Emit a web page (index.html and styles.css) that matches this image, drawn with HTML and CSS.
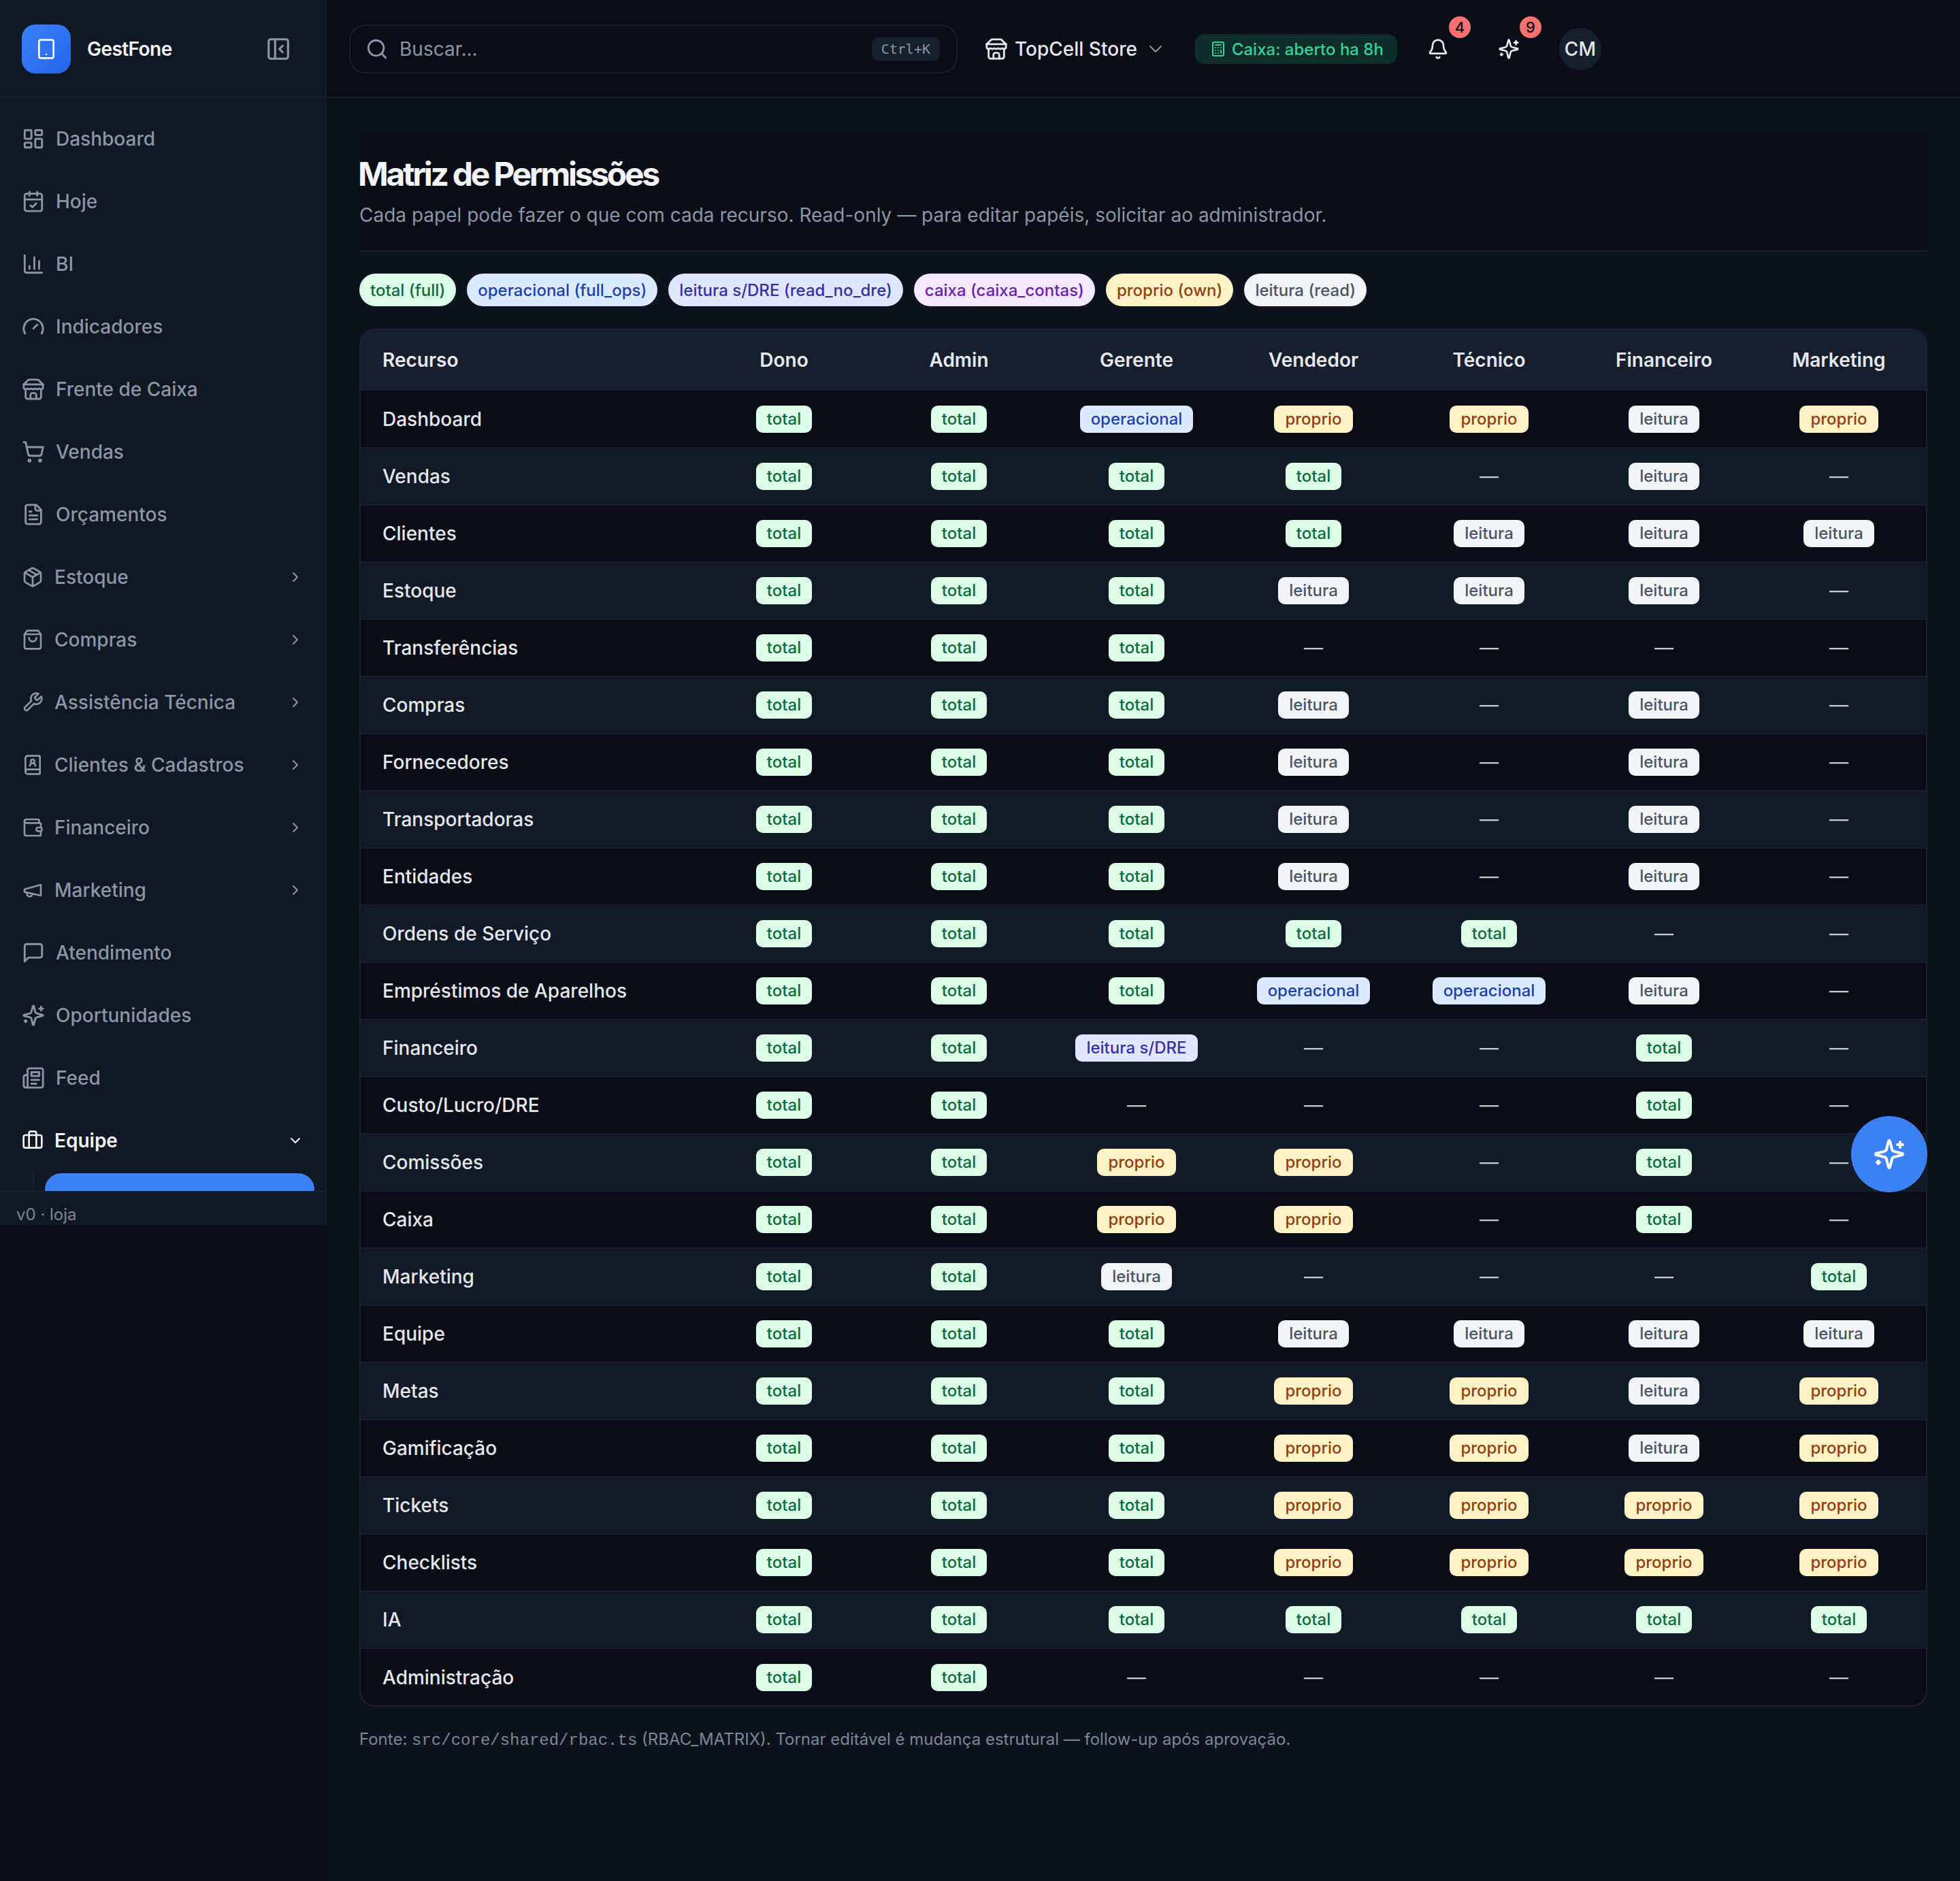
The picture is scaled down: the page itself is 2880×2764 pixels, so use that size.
FILE: index.html
```html
<!DOCTYPE html>
<html lang="pt-BR">
<head>
<meta charset="utf-8">
<title>Matriz de Permissões</title>
<link rel="stylesheet" href="styles.css">
</head>
<body>
<svg class="defs" width="0" height="0" aria-hidden="true">
<symbol id="i-tablet" viewBox="0 0 24 24"><rect x="4" y="2" width="16" height="20" rx="2"/><path d="M12 18h.01"/></symbol>
<symbol id="i-panel" viewBox="0 0 24 24"><rect x="3" y="3" width="18" height="18" rx="2"/><path d="M9 3v18"/><path d="m16 15-3-3 3-3"/></symbol>
<symbol id="i-dash" viewBox="0 0 24 24"><rect x="3" y="3" width="7" height="9" rx="1"/><rect x="14" y="3" width="7" height="5" rx="1"/><rect x="14" y="12" width="7" height="9" rx="1"/><rect x="3" y="16" width="7" height="5" rx="1"/></symbol>
<symbol id="i-cal" viewBox="0 0 24 24"><path d="M8 2v4"/><path d="M16 2v4"/><rect x="3" y="4" width="18" height="18" rx="2"/><path d="M3 10h18"/><path d="m9 16 2 2 4-4"/></symbol>
<symbol id="i-chart" viewBox="0 0 24 24"><path d="M3 3v16a2 2 0 0 0 2 2h16"/><path d="M18 17V9"/><path d="M13 17V5"/><path d="M8 17v-3"/></symbol>
<symbol id="i-gauge" viewBox="0 0 24 24"><path d="m12 14 4-4"/><path d="M3.34 19a10 10 0 1 1 17.32 0"/></symbol>
<symbol id="i-store" viewBox="0 0 24 24"><path d="m2 7 4.41-4.41A2 2 0 0 1 7.83 2h8.34a2 2 0 0 1 1.42.59L22 7"/><path d="M4 12v8a2 2 0 0 0 2 2h12a2 2 0 0 0 2-2v-8"/><path d="M15 22v-4a2 2 0 0 0-2-2h-2a2 2 0 0 0-2 2v4"/><path d="M2 7h20"/><path d="M22 7v3a2 2 0 0 1-2 2a2.7 2.7 0 0 1-1.59-.63.7.7 0 0 0-.82 0A2.7 2.7 0 0 1 16 12a2.7 2.7 0 0 1-1.59-.63.7.7 0 0 0-.82 0A2.7 2.7 0 0 1 12 12a2.7 2.7 0 0 1-1.59-.63.7.7 0 0 0-.82 0A2.7 2.7 0 0 1 8 12a2.7 2.7 0 0 1-1.59-.63.7.7 0 0 0-.82 0A2.7 2.7 0 0 1 4 12a2 2 0 0 1-2-2V7"/></symbol>
<symbol id="i-cart" viewBox="0 0 24 24"><circle cx="8" cy="21" r="1"/><circle cx="19" cy="21" r="1"/><path d="M2.05 2.05h2l2.66 12.42a2 2 0 0 0 2 1.58h9.78a2 2 0 0 0 1.95-1.57l1.65-7.43H5.12"/></symbol>
<symbol id="i-file" viewBox="0 0 24 24"><path d="M15 2H6a2 2 0 0 0-2 2v16a2 2 0 0 0 2 2h12a2 2 0 0 0 2-2V7Z"/><path d="M14 2v4a2 2 0 0 0 2 2h4"/><path d="M10 9H8"/><path d="M16 13H8"/><path d="M16 17H8"/></symbol>
<symbol id="i-pkg" viewBox="0 0 24 24"><path d="m7.5 4.27 9 5.15"/><path d="M21 8a2 2 0 0 0-1-1.73l-7-4a2 2 0 0 0-2 0l-7 4A2 2 0 0 0 3 8v8a2 2 0 0 0 1 1.73l7 4a2 2 0 0 0 2 0l7-4A2 2 0 0 0 21 16Z"/><path d="m3.3 7 8.7 5 8.7-5"/><path d="M12 22V12"/></symbol>
<symbol id="i-bag" viewBox="0 0 24 24"><path d="M6 2 3 6v14a2 2 0 0 0 2 2h14a2 2 0 0 0 2-2V6l-3-4Z"/><path d="M3 6h18"/><path d="M16 10a4 4 0 0 1-8 0"/></symbol>
<symbol id="i-wrench" viewBox="0 0 24 24"><path d="M14.7 6.3a1 1 0 0 0 0 1.4l1.6 1.6a1 1 0 0 0 1.4 0l3.77-3.77a6 6 0 0 1-7.94 7.94l-6.91 6.91a2.12 2.12 0 0 1-3-3l6.91-6.91a6 6 0 0 1 7.94-7.94l-3.76 3.76z"/></symbol>
<symbol id="i-book" viewBox="0 0 24 24"><path d="M15 13a3 3 0 1 0-6 0"/><path d="M4 19.5v-15A2.5 2.5 0 0 1 6.5 2H19a1 1 0 0 1 1 1v18a1 1 0 0 1-1 1H6.5a1 1 0 0 1 0-5H20"/><circle cx="12" cy="8" r="2"/></symbol>
<symbol id="i-wallet" viewBox="0 0 24 24"><path d="M19 7V4a1 1 0 0 0-1-1H5a2 2 0 0 0 0 4h15a1 1 0 0 1 1 1v4h-3a2 2 0 0 0 0 4h3a1 1 0 0 0 1-1v-2a1 1 0 0 0-1-1"/><path d="M3 5v14a2 2 0 0 0 2 2h15a1 1 0 0 0 1-1v-4"/></symbol>
<symbol id="i-mega" viewBox="0 0 24 24"><path d="m3 11 18-5v12L3 14v-3z"/><path d="M11.6 16.8a3 3 0 1 1-5.8-1.6"/></symbol>
<symbol id="i-msg" viewBox="0 0 24 24"><path d="M21 15a2 2 0 0 1-2 2H7l-4 4V5a2 2 0 0 1 2-2h14a2 2 0 0 1 2 2z"/></symbol>
<symbol id="i-spark" viewBox="0 0 24 24"><path d="M9.937 15.5A2 2 0 0 0 8.5 14.063l-6.135-1.582a.5.5 0 0 1 0-.962L8.5 9.936A2 2 0 0 0 9.937 8.5l1.582-6.135a.5.5 0 0 1 .963 0L14.063 8.5A2 2 0 0 0 15.5 9.937l6.135 1.581a.5.5 0 0 1 0 .964L15.5 14.063a2 2 0 0 0-1.437 1.437l-1.582 6.135a.5.5 0 0 1-.963 0z"/><path d="M20 3v4"/><path d="M22 5h-4"/><path d="M4 17v2"/><path d="M5 18H3"/></symbol>
<symbol id="i-news" viewBox="0 0 24 24"><path d="M4 22h16a2 2 0 0 0 2-2V4a2 2 0 0 0-2-2H8a2 2 0 0 0-2 2v16a2 2 0 0 1-2 2Zm0 0a2 2 0 0 1-2-2v-9c0-1.1.9-2 2-2h2"/><path d="M18 14h-8"/><path d="M15 18h-5"/><path d="M10 6h8v4h-8V6Z"/></symbol>
<symbol id="i-case" viewBox="0 0 24 24"><rect x="2" y="6" width="20" height="14" rx="2"/><path d="M16 20V4a2 2 0 0 0-2-2h-4a2 2 0 0 0-2 2v16"/></symbol>
<symbol id="i-right" viewBox="0 0 24 24"><path d="m9 18 6-6-6-6"/></symbol>
<symbol id="i-down" viewBox="0 0 24 24"><path d="m6 9 6 6 6-6"/></symbol>
<symbol id="i-search" viewBox="0 0 24 24"><circle cx="11" cy="11" r="8"/><path d="m21 21-4.3-4.3"/></symbol>
<symbol id="i-bell" viewBox="0 0 24 24"><path d="M10.268 21a2 2 0 0 0 3.464 0"/><path d="M3.262 15.326A1 1 0 0 0 4 17h16a1 1 0 0 0 .74-1.673C19.41 13.956 18 12.499 18 8A6 6 0 0 0 6 8c0 4.499-1.411 5.956-2.738 7.326"/></symbol>
<symbol id="i-calc" viewBox="0 0 24 24"><rect x="4" y="2" width="16" height="20" rx="2"/><path d="M8 6h8"/><path d="M16 14v4"/><path d="M16 10h.01"/><path d="M12 10h.01"/><path d="M8 10h.01"/><path d="M12 14h.01"/><path d="M8 14h.01"/><path d="M12 18h.01"/><path d="M8 18h.01"/></symbol>
</svg>
<div class="app">
<aside class="side">
  <div class="brand">
    <span class="logo"><svg class="ic ic-logo"><use href="#i-tablet"/></svg></span>
    <span class="brand-name">GestFone</span>
    <svg class="ic ic-toggle"><use href="#i-panel"/></svg>
  </div>
  <nav class="nav">
    <a class="item"><svg class="ic"><use href="#i-dash"/></svg><span>Dashboard</span></a>
    <a class="item"><svg class="ic"><use href="#i-cal"/></svg><span>Hoje</span></a>
    <a class="item"><svg class="ic"><use href="#i-chart"/></svg><span>BI</span></a>
    <a class="item"><svg class="ic"><use href="#i-gauge"/></svg><span>Indicadores</span></a>
    <a class="item"><svg class="ic"><use href="#i-store"/></svg><span>Frente de Caixa</span></a>
    <a class="item"><svg class="ic"><use href="#i-cart"/></svg><span>Vendas</span></a>
    <a class="item"><svg class="ic"><use href="#i-file"/></svg><span>Orçamentos</span></a>
    <a class="item group"><svg class="ic"><use href="#i-pkg"/></svg><span>Estoque</span><svg class="ic chev"><use href="#i-right"/></svg></a>
    <a class="item group"><svg class="ic"><use href="#i-bag"/></svg><span>Compras</span><svg class="ic chev"><use href="#i-right"/></svg></a>
    <a class="item group"><svg class="ic"><use href="#i-wrench"/></svg><span>Assistência Técnica</span><svg class="ic chev"><use href="#i-right"/></svg></a>
    <a class="item group"><svg class="ic"><use href="#i-book"/></svg><span>Clientes &amp; Cadastros</span><svg class="ic chev"><use href="#i-right"/></svg></a>
    <a class="item group"><svg class="ic"><use href="#i-wallet"/></svg><span>Financeiro</span><svg class="ic chev"><use href="#i-right"/></svg></a>
    <a class="item group"><svg class="ic"><use href="#i-mega"/></svg><span>Marketing</span><svg class="ic chev"><use href="#i-right"/></svg></a>
    <a class="item"><svg class="ic"><use href="#i-msg"/></svg><span>Atendimento</span></a>
    <a class="item"><svg class="ic"><use href="#i-spark"/></svg><span>Oportunidades</span></a>
    <a class="item"><svg class="ic"><use href="#i-news"/></svg><span>Feed</span></a>
    <a class="item group open"><svg class="ic"><use href="#i-case"/></svg><span>Equipe</span><svg class="ic chev"><use href="#i-down"/></svg></a>
    <div class="sub"><div class="sub-active"></div></div>
  </nav>
  <div class="side-foot">v0 · loja</div>
</aside>
<div class="main">
  <header class="top">
    <div class="search">
      <svg class="ic ic-search"><use href="#i-search"/></svg>
      <span class="search-text">Buscar...</span>
      <kbd class="kbd">Ctrl+K</kbd>
    </div>
    <div class="store">
      <svg class="ic ic-store"><use href="#i-store"/></svg>
      <span>TopCell Store</span>
      <svg class="ic ic-storechev"><use href="#i-down"/></svg>
    </div>
    <div class="cash">
      <svg class="ic ic-calc"><use href="#i-calc"/></svg>
      <span>Caixa: aberto ha 8h</span>
    </div>
    <div class="tool tool-bell"><svg class="ic ic-tool"><use href="#i-bell"/></svg><span class="count">4</span></div>
    <div class="tool tool-spark"><svg class="ic ic-tool"><use href="#i-spark"/></svg><span class="count">9</span></div>
    <div class="avatar">CM</div>
  </header>
  <main class="content">
    <section class="page-head">
      <h1>Matriz de Permissões</h1>
      <p>Cada papel pode fazer o que com cada recurso. Read-only — para editar papéis, solicitar ao administrador.</p>
    </section>
    <div class="chips">
      <span class="chip c-t">total (full)</span>
      <span class="chip c-o">operacional (full_ops)</span>
      <span class="chip c-l">leitura s/DRE (read_no_dre)</span>
      <span class="chip c-c">caixa (caixa_contas)</span>
      <span class="chip c-p">proprio (own)</span>
      <span class="chip c-r">leitura (read)</span>
    </div>
    <div class="table-wrap">
      <table class="matrix">
        <colgroup><col class="w0"><col class="w1"><col class="w2"><col class="w3"><col class="w4"><col class="w5"><col class="w6"><col class="w7"></colgroup>
        <thead><tr><th>Recurso</th><th>Dono</th><th>Admin</th><th>Gerente</th><th>Vendedor</th><th>Técnico</th><th>Financeiro</th><th>Marketing</th></tr></thead>
        <tbody>
<tr><td>Dashboard</td><td><b class="c-t">total</b></td><td><b class="c-t">total</b></td><td><b class="c-o">operacional</b></td><td><b class="c-p">proprio</b></td><td><b class="c-p">proprio</b></td><td><b class="c-r">leitura</b></td><td><b class="c-p">proprio</b></td></tr>
<tr><td>Vendas</td><td><b class="c-t">total</b></td><td><b class="c-t">total</b></td><td><b class="c-t">total</b></td><td><b class="c-t">total</b></td><td>—</td><td><b class="c-r">leitura</b></td><td>—</td></tr>
<tr><td>Clientes</td><td><b class="c-t">total</b></td><td><b class="c-t">total</b></td><td><b class="c-t">total</b></td><td><b class="c-t">total</b></td><td><b class="c-r">leitura</b></td><td><b class="c-r">leitura</b></td><td><b class="c-r">leitura</b></td></tr>
<tr><td>Estoque</td><td><b class="c-t">total</b></td><td><b class="c-t">total</b></td><td><b class="c-t">total</b></td><td><b class="c-r">leitura</b></td><td><b class="c-r">leitura</b></td><td><b class="c-r">leitura</b></td><td>—</td></tr>
<tr><td>Transferências</td><td><b class="c-t">total</b></td><td><b class="c-t">total</b></td><td><b class="c-t">total</b></td><td>—</td><td>—</td><td>—</td><td>—</td></tr>
<tr><td>Compras</td><td><b class="c-t">total</b></td><td><b class="c-t">total</b></td><td><b class="c-t">total</b></td><td><b class="c-r">leitura</b></td><td>—</td><td><b class="c-r">leitura</b></td><td>—</td></tr>
<tr><td>Fornecedores</td><td><b class="c-t">total</b></td><td><b class="c-t">total</b></td><td><b class="c-t">total</b></td><td><b class="c-r">leitura</b></td><td>—</td><td><b class="c-r">leitura</b></td><td>—</td></tr>
<tr><td>Transportadoras</td><td><b class="c-t">total</b></td><td><b class="c-t">total</b></td><td><b class="c-t">total</b></td><td><b class="c-r">leitura</b></td><td>—</td><td><b class="c-r">leitura</b></td><td>—</td></tr>
<tr><td>Entidades</td><td><b class="c-t">total</b></td><td><b class="c-t">total</b></td><td><b class="c-t">total</b></td><td><b class="c-r">leitura</b></td><td>—</td><td><b class="c-r">leitura</b></td><td>—</td></tr>
<tr><td>Ordens de Serviço</td><td><b class="c-t">total</b></td><td><b class="c-t">total</b></td><td><b class="c-t">total</b></td><td><b class="c-t">total</b></td><td><b class="c-t">total</b></td><td>—</td><td>—</td></tr>
<tr><td>Empréstimos de Aparelhos</td><td><b class="c-t">total</b></td><td><b class="c-t">total</b></td><td><b class="c-t">total</b></td><td><b class="c-o">operacional</b></td><td><b class="c-o">operacional</b></td><td><b class="c-r">leitura</b></td><td>—</td></tr>
<tr><td>Financeiro</td><td><b class="c-t">total</b></td><td><b class="c-t">total</b></td><td><b class="c-l">leitura s/DRE</b></td><td>—</td><td>—</td><td><b class="c-t">total</b></td><td>—</td></tr>
<tr><td>Custo/Lucro/DRE</td><td><b class="c-t">total</b></td><td><b class="c-t">total</b></td><td>—</td><td>—</td><td>—</td><td><b class="c-t">total</b></td><td>—</td></tr>
<tr><td>Comissões</td><td><b class="c-t">total</b></td><td><b class="c-t">total</b></td><td><b class="c-p">proprio</b></td><td><b class="c-p">proprio</b></td><td>—</td><td><b class="c-t">total</b></td><td>—</td></tr>
<tr><td>Caixa</td><td><b class="c-t">total</b></td><td><b class="c-t">total</b></td><td><b class="c-p">proprio</b></td><td><b class="c-p">proprio</b></td><td>—</td><td><b class="c-t">total</b></td><td>—</td></tr>
<tr><td>Marketing</td><td><b class="c-t">total</b></td><td><b class="c-t">total</b></td><td><b class="c-r">leitura</b></td><td>—</td><td>—</td><td>—</td><td><b class="c-t">total</b></td></tr>
<tr><td>Equipe</td><td><b class="c-t">total</b></td><td><b class="c-t">total</b></td><td><b class="c-t">total</b></td><td><b class="c-r">leitura</b></td><td><b class="c-r">leitura</b></td><td><b class="c-r">leitura</b></td><td><b class="c-r">leitura</b></td></tr>
<tr><td>Metas</td><td><b class="c-t">total</b></td><td><b class="c-t">total</b></td><td><b class="c-t">total</b></td><td><b class="c-p">proprio</b></td><td><b class="c-p">proprio</b></td><td><b class="c-r">leitura</b></td><td><b class="c-p">proprio</b></td></tr>
<tr><td>Gamificação</td><td><b class="c-t">total</b></td><td><b class="c-t">total</b></td><td><b class="c-t">total</b></td><td><b class="c-p">proprio</b></td><td><b class="c-p">proprio</b></td><td><b class="c-r">leitura</b></td><td><b class="c-p">proprio</b></td></tr>
<tr><td>Tickets</td><td><b class="c-t">total</b></td><td><b class="c-t">total</b></td><td><b class="c-t">total</b></td><td><b class="c-p">proprio</b></td><td><b class="c-p">proprio</b></td><td><b class="c-p">proprio</b></td><td><b class="c-p">proprio</b></td></tr>
<tr><td>Checklists</td><td><b class="c-t">total</b></td><td><b class="c-t">total</b></td><td><b class="c-t">total</b></td><td><b class="c-p">proprio</b></td><td><b class="c-p">proprio</b></td><td><b class="c-p">proprio</b></td><td><b class="c-p">proprio</b></td></tr>
<tr><td>IA</td><td><b class="c-t">total</b></td><td><b class="c-t">total</b></td><td><b class="c-t">total</b></td><td><b class="c-t">total</b></td><td><b class="c-t">total</b></td><td><b class="c-t">total</b></td><td><b class="c-t">total</b></td></tr>
<tr><td>Administração</td><td><b class="c-t">total</b></td><td><b class="c-t">total</b></td><td>—</td><td>—</td><td>—</td><td>—</td><td>—</td></tr>
        </tbody>
      </table>
    </div>
    <p class="source">Fonte: <code>src/core/shared/rbac.ts</code> (RBAC_MATRIX). Tornar editável é mudança estrutural — follow-up após aprovação.</p>
  </main>
</div>
</div>
<button class="fab" type="button" aria-label="Assistente"><svg class="ic ic-fab"><use href="#i-spark"/></svg></button>
</body>
</html>
```
FILE: styles.css
```css
* { box-sizing: border-box; }
html, body { margin: 0; padding: 0; }
body {
  position: relative;
  min-height: 2764px;
  background: #0a0d15;
  color: #e5e7eb;
  font-family: Inter, "Liberation Sans", sans-serif;
  font-size: 28px;
}
.defs { position: absolute; }
.app { display: grid; grid-template-columns: 480px 1fr; min-height: 2764px; }
.ic {
  display: block;
  flex: none;
  width: 32px;
  height: 32px;
  fill: none;
  stroke: currentColor;
  stroke-width: 2;
  stroke-linecap: round;
  stroke-linejoin: round;
}

/* sidebar */
.side {
  height: 1800px;
  display: flex;
  flex-direction: column;
  background: #101823;
  border-right: 2px solid #161e2c;
}
.brand {
  height: 144px;
  flex: none;
  display: flex;
  align-items: center;
  padding: 2px 50px 0 32px;
  border-bottom: 2px solid #182130;
}
.logo {
  width: 72px;
  height: 72px;
  border-radius: 20px;
  display: flex;
  align-items: center;
  justify-content: center;
  color: #fff;
  background: linear-gradient(135deg, #3b82f6, #2563eb);
}
.brand-name {
  margin-left: 24px;
  font-size: 28px;
  font-weight: 600;
  letter-spacing: -0.56px;
  color: #f3f4f6;
}
.ic-toggle { margin-left: auto; width: 38px; height: 38px; color: #8b95a8; }
.nav {
  flex: 1;
  min-height: 0;
  overflow: hidden;
  padding-top: 14px;
}
.item {
  height: 92px;
  display: flex;
  align-items: center;
  gap: 16px;
  padding: 0 32px;
  font-size: 28px;
  font-weight: 500;
  color: #8b95a8;
}
.item > .ic { width: 34px; height: 34px; }
.item.group > .ic { width: 32px; height: 32px; }
.item.group > .chev { width: 24px; height: 24px; margin-left: auto; margin-right: 0; }
.item.open { color: #f3f4f6; font-weight: 600; }
.sub { margin-left: 48px; padding-left: 16px; border-left: 2px solid #182130; padding-top: 2px; }
.sub-active { width: 396px; height: 80px; border-radius: 24px; background: #3b82f6; }
.side-foot {
  height: 50px;
  flex: none;
  padding: 14px 0 0 24px;
  font-size: 24px;
  line-height: 38px;
  color: #7c8699;
  border-top: 2px solid #182130;
}

/* top bar */
.top {
  height: 144px;
  display: flex;
  align-items: center;
  padding: 2px 0 0 33px;
  background: #0a0d15;
  border-bottom: 2px solid #182130;
}
.search {
  width: 894px;
  height: 72px;
  display: flex;
  align-items: center;
  padding: 0 24px 0 22px;
  border: 2px solid #171f2c;
  border-radius: 24px;
  background: #0a0d15;
}
.ic-search { color: #8b95a8; width: 34px; height: 34px; }
.search-text { margin-left: 16px; font-size: 28px; color: #8b95a8; }
.kbd {
  margin-left: auto;
  height: 34px;
  padding: 0 14px;
  display: flex;
  align-items: center;
  border-radius: 8px;
  background: #171f2c;
  font-family: "DejaVu Sans Mono", monospace;
  font-size: 20px;
  color: #8b95a8;
}
.store {
  display: flex;
  align-items: center;
  margin-left: 40px;
  font-size: 28px;
  font-weight: 500;
  color: #e5e7eb;
}
.store .ic-store { width: 34px; height: 34px; margin-right: 10px; }
.ic-storechev { width: 32px; height: 32px; stroke-width: 1.5; margin-left: 11px; color: #8b95a8; }
.cash {
  height: 44px;
  margin-left: 42px;
  padding: 0 20px 0 22px;
  display: flex;
  align-items: center;
  gap: 8px;
  border-radius: 14px;
  background: #0f2e2a;
  color: #34d399;
  font-size: 24px;
  font-weight: 500;
}
.ic-calc { width: 24px; height: 24px; }
.tool { position: relative; width: 32px; height: 32px; color: #e5e7eb; }
.tool-bell { margin-left: 44px; }
.tool-spark { margin-left: 72px; }
.count {
  position: absolute;
  top: -32px;
  left: 32px;
  width: 32px;
  height: 32px;
  display: flex;
  align-items: center;
  justify-content: center;
  border-radius: 50%;
  background: #f87171;
  color: #0a0d15;
  font-size: 22px;
  font-weight: 500;
}
.avatar {
  margin-left: 58px;
  width: 62px;
  height: 62px;
  display: flex;
  align-items: center;
  justify-content: center;
  border-radius: 50%;
  background: #171f2c;
  font-size: 28px;
  font-weight: 500;
  color: #e5e7eb;
}

/* content */
.main { background: #0d121c; }
.content { padding: 48px 48px 0 48px; }
.page-head {
  height: 178px;
  padding-top: 34px;
  background: #0a0d15;
  border-bottom: 2px solid #182130;
}
.page-head h1 {
  margin: 0 0 0 -2px;
  font-size: 48px;
  line-height: 60px;
  font-weight: 700;
  letter-spacing: -3.3px;
  color: #f3f4f6;
}
.page-head p {
  margin: 10px 0 0;
  font-size: 28px;
  line-height: 40px;
  color: #8b95a8;
}
.chips { display: flex; gap: 16px; margin-top: 32px; }
.chip {
  height: 48px;
  display: flex;
  align-items: center;
  padding: 0 16px;
  border-radius: 24px;
  font-size: 24px;
  font-weight: 500;
}
.c-t { background: #dcfce7; color: #0f6b41; }
.c-o { background: #dbeafe; color: #1e40af; }
.c-l { background: #e0e7ff; color: #3730a3; }
.c-c { background: #f3e8ff; color: #6b21a8; }
.c-p { background: #fef3c7; color: #92400e; }
.c-r { background: #f3f4f6; color: #4b5563; }
.table-wrap {
  margin-top: 33px;
  border: 2px solid #1a2230;
  border-radius: 24px;
  overflow: hidden;
}
.matrix { width: 100%; table-layout: fixed; border-collapse: collapse; }
.w0 { width: 496px; } .w1 { width: 252px; } .w2 { width: 262px; } .w3 { width: 260px; }
.w4 { width: 260px; } .w5 { width: 256px; } .w6 { width: 258px; } .w7 { width: 256px; }
.matrix th {
  height: 89px;
  padding: 0 0 2px;
  text-align: center;
  font-size: 28px;
  font-weight: 600;
  color: #e5e7eb;
  background: #171f2e;
}
.matrix th:first-child, .matrix td:first-child { text-align: left; padding-left: 32px; }
.matrix td {
  height: 84px;
  padding: 0;
  text-align: center;
  font-size: 28px;
  color: #c4cbdb;
  border-bottom: 2px solid #181f2d;
}
.matrix td:first-child { font-weight: 500; color: #e5e7eb; }
.matrix tr:nth-child(odd) td { background: #0a0d16; }
.matrix tr:nth-child(even) td { background: #131a27; }
.matrix tr:last-child td { border-bottom: 0; }
.matrix b {
  display: inline-block;
  height: 40px;
  padding: 0 16px;
  border-radius: 10px;
  font-size: 24px;
  font-weight: 500;
  line-height: 40px;
  vertical-align: middle;
}
.source {
  margin: 32px 0 0;
  font-size: 24px;
  line-height: 32px;
  color: #7c8699;
}
.source code { font-family: "Liberation Mono", monospace; font-size: 24px; }

/* floating assistant */
.fab {
  position: absolute;
  left: 2720px;
  top: 1640px;
  width: 112px;
  height: 112px;
  padding: 0;
  display: flex;
  align-items: center;
  justify-content: center;
  border: 0;
  border-radius: 50%;
  background: #3b82f6;
  color: #fff;
}
.ic-fab { width: 48px; height: 48px; }
```
